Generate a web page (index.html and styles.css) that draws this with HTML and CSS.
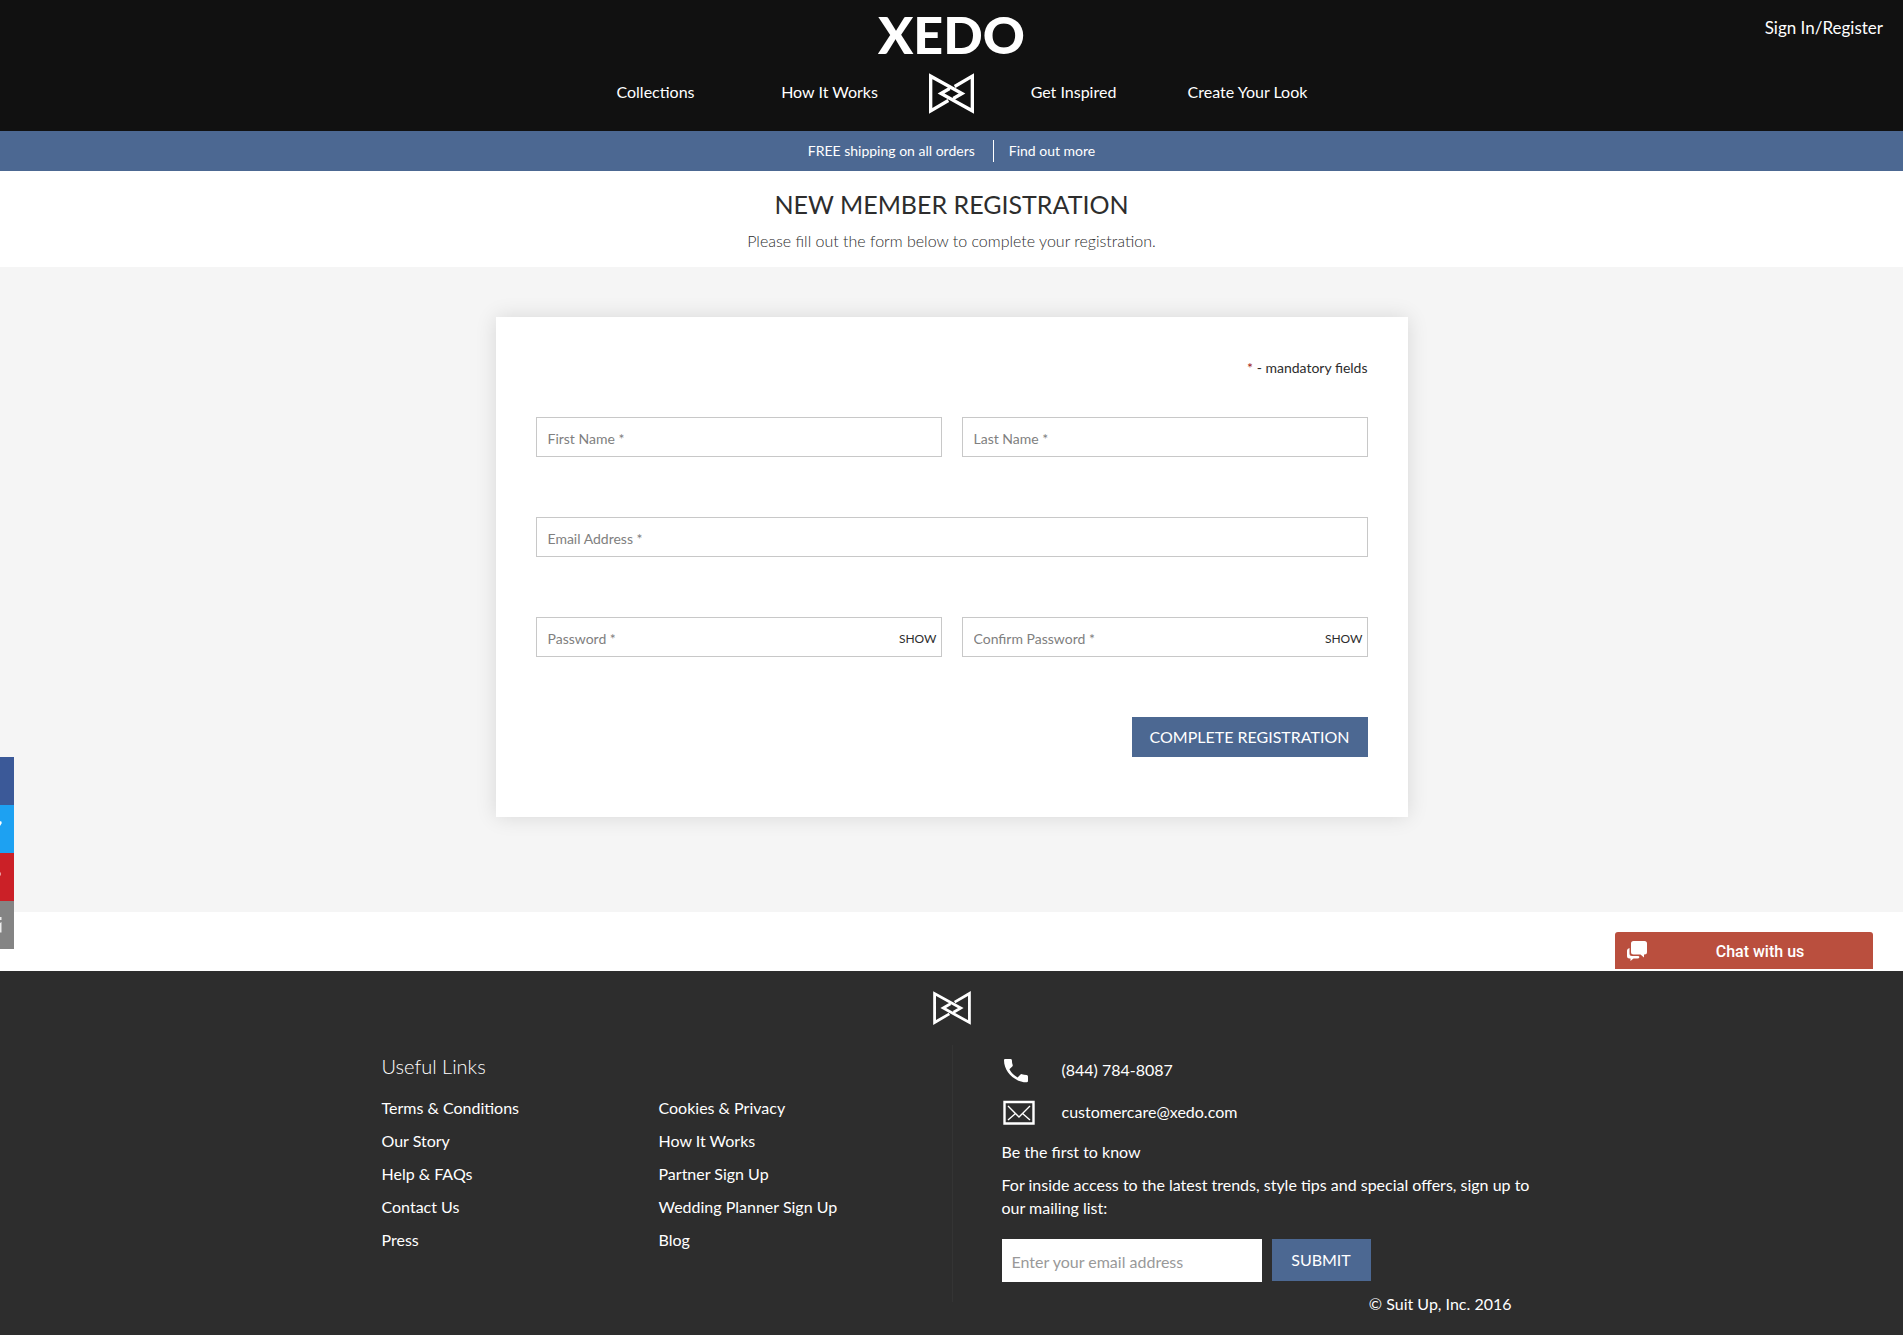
FILE: index.html
```html
<!DOCTYPE html>
<html lang="en">
<head>
<meta charset="utf-8">
<meta name="viewport" content="width=device-width, initial-scale=1">
<title>XEDO - New Member Registration</title>
<link rel="stylesheet" href="styles.css">
</head>
<body>
<svg class="defs" aria-hidden="true">
  <symbol id="bowtie" viewBox="0 0 135 122">
    <path d="M58 82 L5 113 V9 L99 61 L73 76 M77 40 L130 9 V113 L36 61 L62 46" fill="none" stroke="currentColor" stroke-width="10"/>
  </symbol>
</svg>

<header class="site-header">
  <a class="wordmark" href="#">XEDO</a>
  <a class="sign-in" href="#">Sign In/Register</a>
  <nav class="main-nav" aria-label="Main">
    <a href="#">Collections</a>
    <a href="#">How It Works</a>
    <a class="home" href="#" aria-label="Home"><svg class="nav-logo"><use href="#bowtie"/></svg></a>
    <a href="#">Get Inspired</a>
    <a href="#">Create Your Look</a>
  </nav>
</header>

<div class="promo">
  <span class="promo-text">FREE shipping on all orders</span>
  <a class="promo-link" href="#">Find out more</a>
</div>

<main>
  <div class="page-title">
    <h1>NEW MEMBER REGISTRATION</h1>
    <p>Please fill out the form below to complete your registration.</p>
  </div>
  <div class="form-area">
    <form class="card">
      <p class="mandatory"><span class="star">*</span> - mandatory fields</p>
      <div class="fields">
        <input class="field" type="text" placeholder="First Name *" aria-label="First Name">
        <input class="field" type="text" placeholder="Last Name *" aria-label="Last Name">
        <input class="field wide" type="email" placeholder="Email Address *" aria-label="Email Address">
        <div class="field password">
          <input type="password" placeholder="Password *" aria-label="Password">
          <button type="button">SHOW</button>
        </div>
        <div class="field password">
          <input type="password" placeholder="Confirm Password *" aria-label="Confirm Password">
          <button type="button">SHOW</button>
        </div>
      </div>
      <button class="btn complete" type="submit">COMPLETE REGISTRATION</button>
    </form>
  </div>
  <div class="chat-strip">
    <button class="chat" type="button">
      <svg class="chat-icon" viewBox="0 0 20 20" aria-hidden="true">
        <path d="M6.500 0h11Q20 0 20 2.500v8.500q0 2.500-2.500 2.500h-.500v3l-3.500-3H6.500Q4 13.500 4 11V2.500Q4 0 6.500 0z" fill="#fff"/>
        <path d="M2.500 7v5.500Q2.500 15 5 15h6.500l1 1q-.500 1.500-2 1.500H6.500L3.500 20v-2.500H2.500Q0 17.500 0 15V9.500Q0 7.500 2.500 7z" fill="#fff"/>
      </svg>
      <span>Chat with us</span>
    </button>
  </div>
</main>

<footer class="site-footer">
  <svg class="footer-logo" aria-hidden="true"><use href="#bowtie"/></svg>
  <div class="footer-cols">
    <section class="links">
      <h2>Useful Links</h2>
      <ul>
        <li><a href="#">Terms &amp; Conditions</a></li>
        <li><a href="#">Cookies &amp; Privacy</a></li>
        <li><a href="#">Our Story</a></li>
        <li><a href="#">How It Works</a></li>
        <li><a href="#">Help &amp; FAQs</a></li>
        <li><a href="#">Partner Sign Up</a></li>
        <li><a href="#">Contact Us</a></li>
        <li><a href="#">Wedding Planner Sign Up</a></li>
        <li><a href="#">Press</a></li>
        <li><a href="#">Blog</a></li>
      </ul>
    </section>
    <section class="contact">
      <a class="contact-row" href="#">
        <svg viewBox="0 0 36 30" aria-hidden="true"><path d="M4 3h5.500q1.300 0 1.400 1.300 0 2.400.8 4.700.2.800-.4 1.400L8.400 13.200q2.800 5.300 8.200 8.200l2.900-2.900q.6-.6 1.400-.3 2.200.7 4.700.8 1.400.1 1.400 1.400V25q0 1.300-1.400 1.300C13.500 26.300 3 15.500 3 4.300Q3 3 4 3z" fill="#fff"/></svg>
        <span>(844) 784-8087</span>
      </a>
      <a class="contact-row" href="#">
        <svg viewBox="0 0 36 30" aria-hidden="true"><path d="M3.500 4h29v21.500h-29z" fill="none" stroke="#fff" stroke-width="2.400"/><path d="M7 8l11 11L29 8M7 22l7.500-6.500M29 22l-7.500-6.500" fill="none" stroke="#fff" stroke-width="1.400"/></svg>
        <span>customercare@xedo.com</span>
      </a>
      <p class="first">Be the first to know</p>
      <p class="blurb">For inside access to the latest trends, style tips and special offers, sign up to our mailing list:</p>
      <form class="subscribe">
        <input type="email" placeholder="Enter your email address" aria-label="Email address">
        <button class="btn" type="submit">SUBMIT</button>
      </form>
    </section>
  </div>
  <p class="copyright">© Suit Up, Inc. 2016</p>
</footer>

<aside class="social" aria-label="Share">
  <a class="facebook" href="#" aria-label="Facebook"></a>
  <a class="twitter" href="#" aria-label="Twitter"><svg viewBox="0 0 14 48"><path d="M0 16l2 1-1 1 1-.300L0 21z" fill="#fff"/></svg></a>
  <a class="pinterest" href="#" aria-label="Pinterest"><svg viewBox="0 0 14 48"><path d="M0 19q1 .500 1 2t-1 2z" fill="#fff" opacity=".6"/></svg></a>
  <a class="email" href="#" aria-label="Email"><svg viewBox="0 0 14 48"><path d="M0 16h1.500v3H0zM0 22l1.500-1v10.500H0z" fill="#fff" opacity=".85"/></svg></a>
</aside>
</body>
</html>
```
FILE: styles.css
```css
* {
  box-sizing: border-box;
}

body {
  position: relative;
  margin: 0;
  background: #fff;
  color: #2d2d2d;
  font: 16px/23px Lato, "Open Sans", sans-serif;
}

h1, h2, p, ul {
  margin: 0;
  padding: 0;
  font-weight: 400;
}

a {
  color: inherit;
  text-decoration: none;
}

button, input {
  font: inherit;
  border: 0;
  border-radius: 0;
}

button {
  cursor: pointer;
}

.defs {
  position: absolute;
  width: 0;
  height: 0;
}

.btn {
  padding: 0 0 2px;
  background: #4c6892;
  color: #fff;
}

/* Header */
.site-header {
  position: relative;
  padding: 8px 0 17px;
  background: #111;
  color: #fff;
}

.wordmark {
  display: block;
  width: max-content;
  margin: 0 auto;
  font-size: 52px;
  font-weight: 900;
  line-height: 52px;
}

.sign-in {
  position: absolute;
  top: 16px;
  right: 20px;
  font-size: 17px;
}

.main-nav {
  display: grid;
  grid-template-columns: 174px 174px 70px 174px 174px;
  justify-content: center;
  align-items: center;
  height: 41px;
  margin-top: 13px;
  text-align: center;
}

.main-nav a:not(.home) {
  padding-bottom: 4px;
}

.nav-logo {
  display: block;
  width: 45px;
  height: 41px;
  margin: 0 auto;
}

.promo {
  display: flex;
  justify-content: center;
  align-items: center;
  height: 40px;
  background: #4c6892;
  color: #fff;
  font-size: 14px;
  line-height: 22px;
}

.promo-text {
  padding-right: 18px;
  border-right: 1px solid #fff;
}

.promo-link {
  padding-left: 15px;
}

/* Registration */
.page-title {
  padding: 17px 0 15px;
  text-align: center;
}

.page-title h1 {
  font-size: 25px;
  line-height: 32px;
}

.page-title p {
  margin-top: 9px;
  font-weight: 300;
}

.form-area {
  padding: 50px 20px 95px;
  background: #f5f5f5;
}

.card {
  max-width: 912px;
  margin: 0 auto;
  padding: 40px 40px 60px;
  background: #fff;
  box-shadow: 0 0 20px rgba(0, 0, 0, .12);
}

.mandatory {
  font-size: 14px;
  line-height: 22px;
  text-align: right;
}

.star {
  color: #a32222;
}

.fields {
  display: grid;
  grid-template-columns: 1fr 1fr;
  gap: 60px 20px;
  margin: 38px 0 60px;
}

.field {
  width: 100%;
  height: 40px;
  border: 1px solid #c8c8c8;
  background: #fff;
}

.field, .field input {
  font-size: 14px;
}

input.field, .field input {
  padding: 2px 11px 0;
}

.wide {
  grid-column: 1 / -1;
}

.field::placeholder, .field input::placeholder {
  color: #808080;
}

.password {
  display: flex;
}

.password input {
  flex: 1;
  min-width: 0;
}

.password button {
  padding: 2px 4px 0;
  background: none;
  color: #2d2d2d;
  font-size: 12px;
}

.complete {
  display: block;
  width: 236px;
  height: 40px;
  margin-left: auto;
}

/* Chat */
.chat-strip {
  display: flex;
  justify-content: flex-end;
  padding: 20px 30px 2px;
}

.chat {
  display: flex;
  align-items: center;
  width: 258px;
  height: 37px;
  padding: 0 12px;
  border-radius: 3px 3px 0 0;
  background: #ba4f3e;
  color: #fff;
  font: 500 16px/20px Roboto, "Open Sans", sans-serif;
}

.chat-icon {
  width: 20px;
  height: 20px;
}

.chat span {
  flex: 1;
  padding: 2px 0 0 12px;
}

/* Footer */
.site-footer {
  padding: 20px 20px 23px;
  background: #2d2d2d;
  color: #fff;
}

.footer-logo {
  display: block;
  width: 38px;
  height: 34px;
  margin: 0 auto 20px;
}

.footer-cols {
  display: grid;
  grid-template-columns: 1fr 1fr;
  max-width: 1140px;
  margin: 0 auto;
}

.links h2 {
  padding-top: 9px;
  font-size: 20px;
  font-weight: 300;
  line-height: 24px;
}

.links ul {
  display: grid;
  grid-template-columns: 277px 1fr;
  gap: 10px 0;
  margin-top: 18px;
  list-style: none;
}

.contact {
  padding: 3px 0 20px 49px;
  border-left: 1px solid #343434;
}

.contact-row {
  display: flex;
  align-items: center;
  gap: 25px;
  height: 42px;
}

.contact-row svg {
  width: 36px;
  height: 30px;
  margin: 4px 0 0 -1px;
}

.first {
  margin-top: 8px;
}

/* The sentence runs slightly into the right gutter */
.blurb {
  margin: 10px -16px 0 0;
}

.subscribe {
  display: flex;
  gap: 10px;
  margin-top: 20px;
}

.subscribe input {
  width: 260px;
  height: 43px;
  padding: 2px 10px 0;
  background: #fff;
}

.subscribe input::placeholder {
  color: #999;
}

.subscribe .btn {
  width: 99px;
  height: 42px;
}

.copyright {
  max-width: 1140px;
  margin: -10px auto 0;
  padding-right: 10px;
  text-align: right;
}

/* Share bar, slid mostly off the left edge */
.social {
  position: absolute;
  top: 757px;
  left: 0;
  width: 14px;
}

.social a, .social svg {
  display: block;
  width: 14px;
  height: 48px;
}

.facebook { background: #3b5998; }
.twitter { background: #1da1f2; }
.pinterest { background: #cb2027; }
.email { background: #848484; }
```
